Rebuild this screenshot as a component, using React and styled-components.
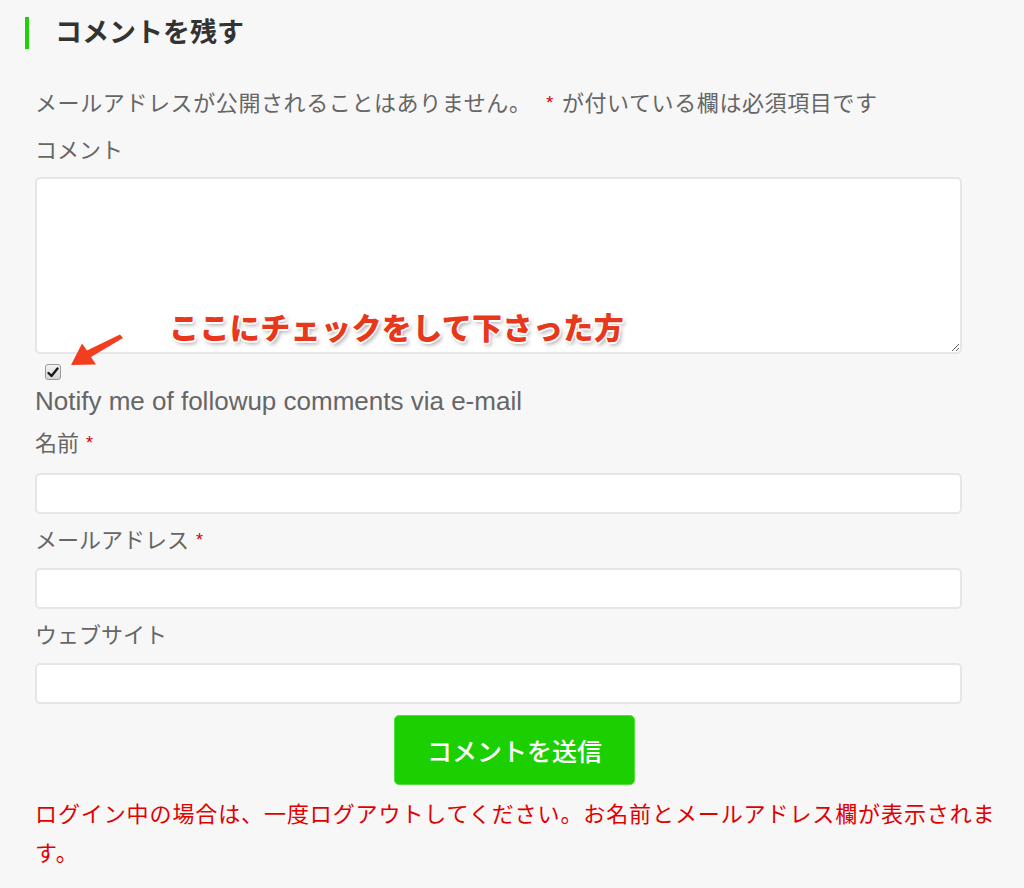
import React from "react";
import styled, { createGlobalStyle } from "styled-components";

const Global = createGlobalStyle`
  html, body { margin: 0; padding: 0; background: #f7f7f7; }
  body { font-family: "Liberation Sans", "Noto Sans CJK JP", sans-serif; color: #666; }
  * { box-sizing: border-box; }
`;

const Page = styled.div`
  padding: 17px 0 0 25px;
  width: 1024px;
  min-height: 888px;
`;

const Heading = styled.h3`
  margin: 0;
  height: 32px;
  line-height: 32px;
  border-left: 4px solid #1ed100;
  padding-left: 26px;
  font-size: 27px;
  font-weight: 700;
  color: #333;
`;

const Form = styled.form`
  width: 980px;
  margin-left: 10px;
  display: flex;
  flex-direction: column;
`;

const Line = styled.p`
  margin: ${(p) => p.$mt || 0}px 0 0;
  height: 36px;
  line-height: 36px;
  font-size: 22px;
  letter-spacing: ${(p) => p.$ls || 0}px;
  color: #666;
  white-space: nowrap;
`;

const Req = styled.span`
  position: relative;
  top: -2px;
  color: #d40000;
  font-size: 18px;
  margin: 0 ${(p) => p.$mr || 4}px 0 ${(p) => p.$ml || 4}px;
`;

const CommentArea = styled.div`
  position: relative;
  margin-top: 8px;
  width: 927px;
`;

const TextArea = styled.textarea`
  display: block;
  width: 927px;
  height: 177px;
  border: 2px solid #e6e6e6;
  border-radius: 5px;
  background: #fff;
  resize: both;
  outline: none;
  font: inherit;
`;

const CheckBox = styled.span`
  display: flex;
  align-items: center;
  justify-content: center;
  width: 16px;
  height: 16px;
  margin: 10px 0 0 10px;
  border: 1px solid #9b9b9b;
  border-radius: 3px;
  background: linear-gradient(#f4f4f4, #d6d6d6);
`;

const Annotation = styled.span`
  position: absolute;
  left: 134px;
  top: 129px;
  font-size: 30px;
  line-height: 40px;
  letter-spacing: 0.4px;
  font-weight: 900;
  font-family: "Noto Sans CJK JP", sans-serif;
  color: #e8381c;
  white-space: nowrap;
  text-shadow: 1.5px 0 0 #fff, -1.5px 0 0 #fff, 0 1.5px 0 #fff, 0 -1.5px 0 #fff,
    1px 1px 0 #fff, -1px -1px 0 #fff, 1px -1px 0 #fff, -1px 1px 0 #fff,
    2px 3px 4px rgba(0, 0, 0, 0.35);
`;

const ArrowSvg = styled.svg`
  position: absolute;
  left: 30px;
  top: 157px;
  overflow: visible;
`;

const Notify = styled.p`
  margin: 3px 0 0;
  height: 36px;
  line-height: 36px;
  font-size: 26px;
  color: #666;
`;

const Input = styled.input`
  display: block;
  width: 927px;
  height: 41px;
  margin-top: ${(p) => p.$mt || 9}px;
  border: 2px solid #e6e6e6;
  border-radius: 5px;
  background: #fff;
  outline: none;
`;

const ButtonRow = styled.div`
  width: 959px;
  display: flex;
  justify-content: center;
  margin-top: 11px;
`;

const Submit = styled.button`
  width: 241px;
  height: 70px;
  border: 1px solid #52e03a;
  border-radius: 5px;
  background: #1ccf00;
  color: #fff;
  font-family: "Noto Sans CJK JP", sans-serif;
  font-size: 25px;
  font-weight: 500;
  cursor: pointer;
`;

const Warning = styled.p`
  margin: 8px 0 0;
  font-family: "Noto Sans CJK JP", sans-serif;
  font-size: 22px;
  line-height: 39px;
  color: #e00000;
  letter-spacing: 0.9px;
`;

export default function App() {
  return (
    <>
      <Global />
      <Page>
        <Heading>コメントを残す</Heading>
        <Form onSubmit={(e) => e.preventDefault()}>
          <Line $mt={37} $ls={0.6}>
            メールアドレスが公開されることはありません。 <Req $ml={8} $mr={8}>*</Req>が付いている欄は必須項目です
          </Line>
          <Line $mt={11}>コメント</Line>
          <CommentArea>
            <TextArea />
            <CheckBox>
              <svg width="12" height="11" viewBox="0 0 12 11">
                <path d="M1.5 6 L4.5 9 L10.5 1.5" fill="none" stroke="#1a1a1a" strokeWidth="2.4" strokeLinecap="round" strokeLinejoin="round" />
              </svg>
            </CheckBox>
            <Annotation>ここにチェックをして下さった方</Annotation>
            <ArrowSvg width="60" height="35" viewBox="0 0 60 35">
              <polygon
                points="6,31 17,9.5 22,16.4 55,0.5 58,4 26,23 31,30.5"
                fill="#f23d1e"
              />
            </ArrowSvg>
          </CommentArea>
          <Notify>Notify me of followup comments via e-mail</Notify>
          <Line $mt={7}>
            名前<Req $ml={7}>*</Req>
          </Line>
          <Input $mt={11} />
          <Line $mt={9}>
            メールアドレス<Req $ml={7}>*</Req>
          </Line>
          <Input />
          <Line $mt={9}>ウェブサイト</Line>
          <Input />
          <ButtonRow>
            <Submit type="submit">コメントを送信</Submit>
          </ButtonRow>
          <Warning>
            ログイン中の場合は、一度ログアウトしてください。お名前とメールアドレス欄が表示されます。
          </Warning>
        </Form>
      </Page>
    </>
  );
}
